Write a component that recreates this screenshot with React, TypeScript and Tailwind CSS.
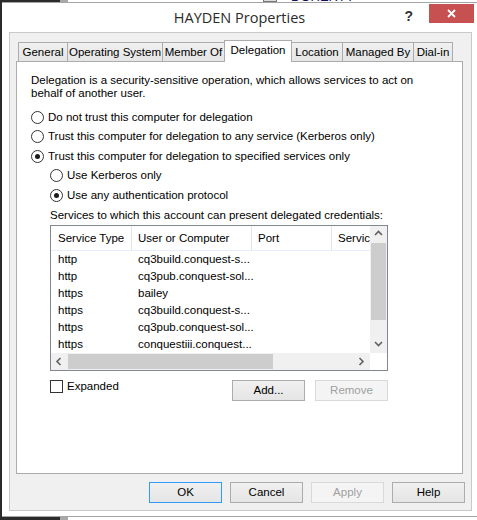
const tabs = [
  { label: "General", w: "w-[50px]" },
  { label: "Operating System", w: "w-[96px]" },
  { label: "Member Of", w: "w-[63px]" },
  { label: "Delegation", w: "w-[68px]", active: true },
  { label: "Location", w: "w-[52px]" },
  { label: "Managed By", w: "w-[72px]" },
  { label: "Dial-in", w: "w-[40px]" },
];

const services = [
  ["http", "cq3build.conquest-s..."],
  ["http", "cq3pub.conquest-sol..."],
  ["https", "bailey"],
  ["https", "cq3build.conquest-s..."],
  ["https", "cq3pub.conquest-sol..."],
  ["https", "conquestiii.conquest..."],
];

function Radio({ checked }: { checked?: boolean }) {
  return (
    <span className="flex h-[13px] w-[13px] shrink-0 items-center justify-center rounded-full border border-[#333] bg-white">
      {checked && <span className="h-[5px] w-[5px] rounded-full bg-[#1a1a1a]" />}
    </span>
  );
}

function Chevron({ dir }: { dir: "up" | "down" | "left" | "right" }) {
  const d = {
    up: "M1 5 L4.5 1.5 L8 5",
    down: "M1 2 L4.5 5.5 L8 2",
    left: "M5.5 1 L2 4.5 L5.5 8",
    right: "M2.5 1 L6 4.5 L2.5 8",
  }[dir];
  return (
    <svg width="9" height="9" viewBox="0 0 9 9" fill="none">
      <path d={d} stroke="#606060" strokeWidth="1.6" />
    </svg>
  );
}

function Button({ label, variant }: { label: string; variant?: "default" | "disabled" }) {
  const cls =
    variant === "default"
      ? "border-[#3399ff] bg-gradient-to-b from-[#f0f0f0] to-[#e5e5e5] text-black"
      : variant === "disabled"
        ? "border-[#d9d9d9] bg-[#f4f4f4] text-[#a0a0a0]"
        : "border-[#acacac] bg-gradient-to-b from-[#f0f0f0] to-[#e5e5e5] text-black";
  return (
    <div className={`flex h-[21px] w-[73px] items-center justify-center border ${cls}`}>
      {label}
    </div>
  );
}

export default function App() {
  return (
    <div className="flex h-[520px] w-[477px] flex-col overflow-hidden whitespace-nowrap bg-[#2b2b2b] font-['Liberation_Sans',Arial,sans-serif] text-[11.5px] leading-[13px] text-black">
      {/* background behind the dialog */}
      <div className="flex h-[2px] shrink-0">
        <div className="w-[60px] bg-[#2b2b2b]" />
        <div className="w-[8px] bg-[#a8a8a8]" />
        <div className="flex flex-1 overflow-hidden bg-white">
          <div className="ml-[195px] -mt-[9px] flex shrink-0 items-end gap-[14px] text-[13px] leading-[11px] text-[#101060]">
            <span className="h-[11px] w-[14px] border border-[#777] bg-[#ddd]" />
            <span>DOHERTY</span>
          </div>
        </div>
      </div>

      {/* window */}
      <div className="ml-[2px] flex h-[515px] w-[475px] shrink-0 flex-col border-y border-[#a5a5a5] bg-white">
        {/* title bar */}
        <div className="grid h-[29px] shrink-0 grid-cols-[1fr_auto_1fr]">
          <div />
          <div className="flex items-center pb-[1px] font-['Open_Sans','Liberation_Sans',sans-serif] text-[14.5px] text-[#2b2b2b]">
            HAYDEN Properties
          </div>
          <div className="flex justify-end">
            <div className="mr-[16px] mt-[5px] text-[14px] font-bold leading-[16px] text-[#333]">?</div>
            <div className="mr-[3px] mt-[1px] flex h-[19px] w-[45px] items-center justify-center bg-[#c75050]">
              <svg width="9" height="9" viewBox="0 0 9 9">
                <path d="M1 1 L8 8 M8 1 L1 8" stroke="#fff" strokeWidth="1.8" />
              </svg>
            </div>
          </div>
        </div>

        {/* client area */}
        <div className="ml-[7px] flex h-[479px] w-[463px] shrink-0 flex-col border border-[#c9c9c9] bg-[#f0f0f0]">
          <div className="ml-[6px] mt-[7px] flex w-[447px] flex-col">
            {/* tabs */}
            <div className="flex h-[21px] items-end pl-[2px]">
              {tabs.map((t, i) =>
                t.active ? (
                  <div
                    key={t.label}
                    className={`relative z-10 -mb-px ${i ? "-ml-px" : ""} flex h-[22px] ${t.w} shrink-0 items-start justify-center border border-b-0 border-[#acacac] bg-white pt-[3px]`}
                  >
                    {t.label}
                  </div>
                ) : (
                  <div
                    key={t.label}
                    className={`${i ? "-ml-px" : ""} flex h-[19px] ${t.w} shrink-0 items-center justify-center border border-b-0 border-[#acacac] bg-gradient-to-b from-[#f0f0f0] to-[#e5e5e5]`}
                  >
                    {t.label}
                  </div>
                ),
              )}
            </div>

            {/* tab panel */}
            <div className="flex h-[413px] flex-col border border-[#acacac] bg-white pt-[12px]">
              <p className="pl-[14px]">
                Delegation is a security-sensitive operation, which allows services to act on
                <br />
                behalf of another user.
              </p>

              <div className="mt-[7px] flex flex-col">
                <div className="flex h-[20px] items-center gap-[4px] pl-[14px]">
                  <Radio />
                  <span>Do not trust this computer for delegation</span>
                </div>
                <div className="flex h-[19px] items-center gap-[4px] pl-[14px]">
                  <Radio />
                  <span>Trust this computer for delegation to any service (Kerberos only)</span>
                </div>
                <div className="flex h-[20px] items-center gap-[4px] pl-[14px]">
                  <Radio checked />
                  <span>Trust this computer for delegation to specified services only</span>
                </div>
                <div className="flex h-[19px] items-center gap-[4px] pl-[33px]">
                  <Radio />
                  <span>Use Kerberos only</span>
                </div>
                <div className="flex h-[20px] items-center gap-[4px] pl-[33px]">
                  <Radio checked />
                  <span>Use any authentication protocol</span>
                </div>
                <div className="flex h-[20px] items-center pl-[33px]">
                  Services to which this account can present delegated credentials:
                </div>
              </div>

              {/* services list */}
              <div className="ml-[33px] flex h-[146px] w-[338px] border border-[#828790] bg-white">
                <div className="flex w-[319px] flex-col overflow-hidden">
                  <div className="flex h-[25px] shrink-0 border-b border-[#e5eef9]">
                    <div className="flex w-[81px] shrink-0 items-center border-r border-[#e5e5e5] pl-[7px]">Service Type</div>
                    <div className="flex w-[120px] shrink-0 items-center border-r border-[#e5e5e5] pl-[6px]">User or Computer</div>
                    <div className="flex w-[80px] shrink-0 items-center border-r border-[#e5e5e5] pl-[6px]">Port</div>
                    <div className="flex w-[120px] shrink-0 items-center pl-[6px]">Service Name</div>
                  </div>
                  {services.map(([type, host], i) => (
                    <div key={i} className="flex h-[17px] shrink-0 items-center">
                      <div className="w-[81px] shrink-0 pl-[7px]">{type}</div>
                      <div className="w-[120px] shrink-0 pl-[6px]">{host}</div>
                    </div>
                  ))}
                  <div className="flex h-[17px] shrink-0 items-center bg-[#f0f0f0]">
                    <div className="flex w-[17px] shrink-0 justify-center">
                      <Chevron dir="left" />
                    </div>
                    <div className="h-[15px] w-[205px] bg-[#cdcdcd]" />
                    <div className="flex-1" />
                    <div className="flex w-[17px] shrink-0 justify-center">
                      <Chevron dir="right" />
                    </div>
                  </div>
                </div>
                <div className="flex w-[17px] flex-col">
                  <div className="flex h-[127px] flex-col items-center bg-[#f0f0f0]">
                    <div className="flex h-[17px] items-center">
                      <Chevron dir="up" />
                    </div>
                    <div className="h-[77px] w-[15px] bg-[#cdcdcd]" />
                    <div className="flex-1" />
                    <div className="flex h-[17px] items-center">
                      <Chevron dir="down" />
                    </div>
                  </div>
                  <div className="h-[17px] bg-white" />
                </div>
              </div>

              <div className="ml-[33px] mt-[9px] flex w-[338px] items-start justify-between">
                <div className="flex items-center gap-[4px]">
                  <span className="h-[13px] w-[13px] border border-[#333] bg-white" />
                  <span>Expanded</span>
                </div>
                <div className="flex gap-[10px]">
                  <Button label="Add..." />
                  <Button label="Remove" variant="disabled" />
                </div>
              </div>
            </div>
          </div>

          {/* dialog buttons */}
          <div className="mr-[6px] mt-[8px] flex justify-end gap-[8px]">
            <Button label="OK" variant="default" />
            <Button label="Cancel" />
            <Button label="Apply" variant="disabled" />
            <Button label="Help" />
          </div>
        </div>
      </div>

      <div className="flex h-[3px] shrink-0">
        <div className="w-[60px] bg-[#2b2b2b]" />
        <div className="w-[8px] bg-[#a8a8a8]" />
        <div className="flex-1 bg-white" />
      </div>
    </div>
  );
}
